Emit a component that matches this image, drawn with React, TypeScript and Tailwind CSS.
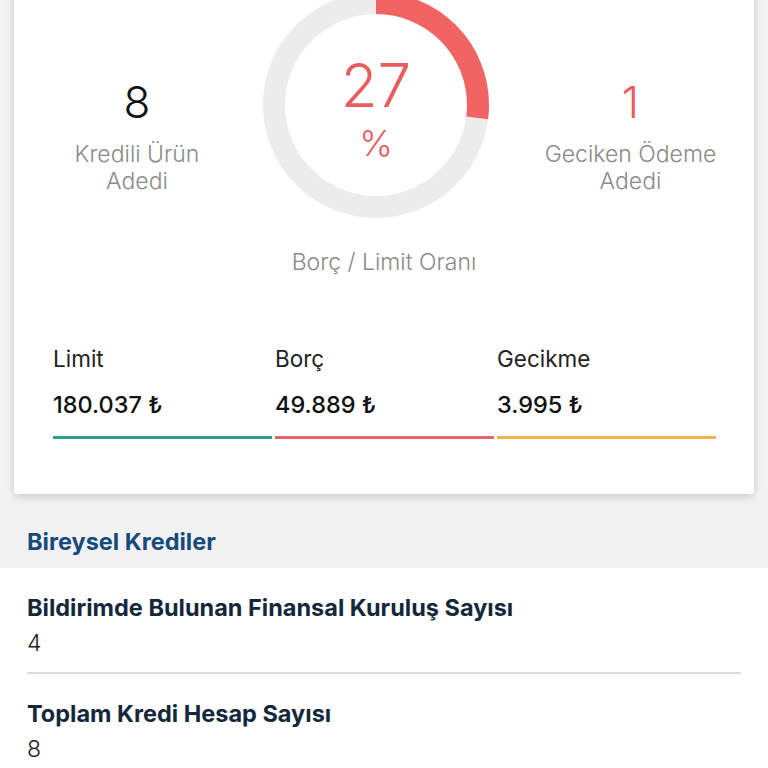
import React from 'react';

const font = { fontFamily: 'Inter, "Noto Sans", sans-serif' };

function Donut({ percent }: { percent: number }) {
  const r = 102;
  const c = 2 * Math.PI * r;
  return (
    <div className="relative h-[226px] w-[226px] shrink-0">
      <svg width="226" height="226" viewBox="0 0 226 226" className="block">
        <circle cx="113" cy="113" r={r} fill="none" stroke="#ececec" strokeWidth="22" />
        <circle
          cx="113"
          cy="113"
          r={r}
          fill="none"
          stroke="#f26464"
          strokeWidth="22"
          strokeDasharray={`${(c * percent) / 100} ${c}`}
          transform="rotate(-90 113 113)"
        />
      </svg>
      <div className="absolute inset-0 flex flex-col items-center text-[#e85d5d]">
        <span className="mt-[62px] text-[60px] font-light leading-[62px]">{percent}</span>
        <span className="mt-[7px] text-[36px] font-light leading-[40px]">%</span>
      </div>
    </div>
  );
}

function Stat({ label, value, bar }: { label: string; value: string; bar: string }) {
  return (
    <div className="flex flex-col">
      <span className="text-[22.5px] leading-[28px] text-[#222]">{label}</span>
      <span className="mt-[18px] text-[23.5px] font-medium leading-[28px] text-[#111]">{value}</span>
      <div className={`mt-[17px] h-[3px] ${bar}`} />
    </div>
  );
}

function InfoRow({ title, value, last }: { title: string; value: string; last?: boolean }) {
  return (
    <div className={last ? 'pt-[26px]' : 'border-b-2 border-[#dcdcdc] pb-[15px] pt-[26px]'}>
      <div className="text-[23.5px] font-bold leading-[28px] text-[#14283c]">{title}</div>
      <div className="mt-[7px] text-[23px] font-light leading-[28px] text-[#222]">{value}</div>
    </div>
  );
}

export default function App() {
  return (
    <div className="h-[768px] w-[768px] overflow-hidden bg-[#f2f2f2]" style={font}>
      <div className="mx-[14px] mt-[-30px] rounded-[3px] bg-white pb-[55px] pt-[22px] shadow-[0_2px_8px_rgba(0,0,0,0.18)]">
        <div className="flex items-start">
          <div className="flex w-[246px] flex-col items-center pt-[84px]">
            <span className="text-[44px] font-light leading-[52px] text-[#111]">8</span>
            <span className="mt-[13px] text-center text-[23px] font-light leading-[27px] text-[#8a8a8a]">
              Kredili Ürün
              <br />
              Adedi
            </span>
          </div>
          <div className="ml-[3px]">
            <Donut percent={27} />
          </div>
          <div className="flex w-[265px] flex-col items-center pl-[18px] pt-[84px]">
            <span className="text-[44px] font-light leading-[52px] text-[#e85d5d]">1</span>
            <span className="mt-[13px] text-center text-[23px] font-light leading-[27px] text-[#8a8a8a]">
              Geciken Ödeme
              <br />
              Adedi
            </span>
          </div>
        </div>
        <div className="mt-[30px] text-center text-[23px] font-light leading-[28px] text-[#8a8a8a]">
          Borç / Limit Oranı
        </div>
        <div className="mt-[69px] grid grid-cols-3 gap-[3px] pl-[39px] pr-[38px]">
          <Stat label="Limit" value="180.037 ₺" bar="bg-[#2f9e92]" />
          <Stat label="Borç" value="49.889 ₺" bar="bg-[#e5646a]" />
          <Stat label="Gecikme" value="3.995 ₺" bar="bg-[#f0b44e]" />
        </div>
      </div>
      <div className="px-[27px] pb-[12px] pt-[34px] text-[23.5px] font-bold leading-[28px] text-[#174a7c]">
        Bireysel Krediler
      </div>
      <div className="bg-white px-[27px] pb-[40px]">
        <InfoRow title="Bildirimde Bulunan Finansal Kuruluş Sayısı" value="4" />
        <InfoRow title="Toplam Kredi Hesap Sayısı" value="8" last />
      </div>
    </div>
  );
}
